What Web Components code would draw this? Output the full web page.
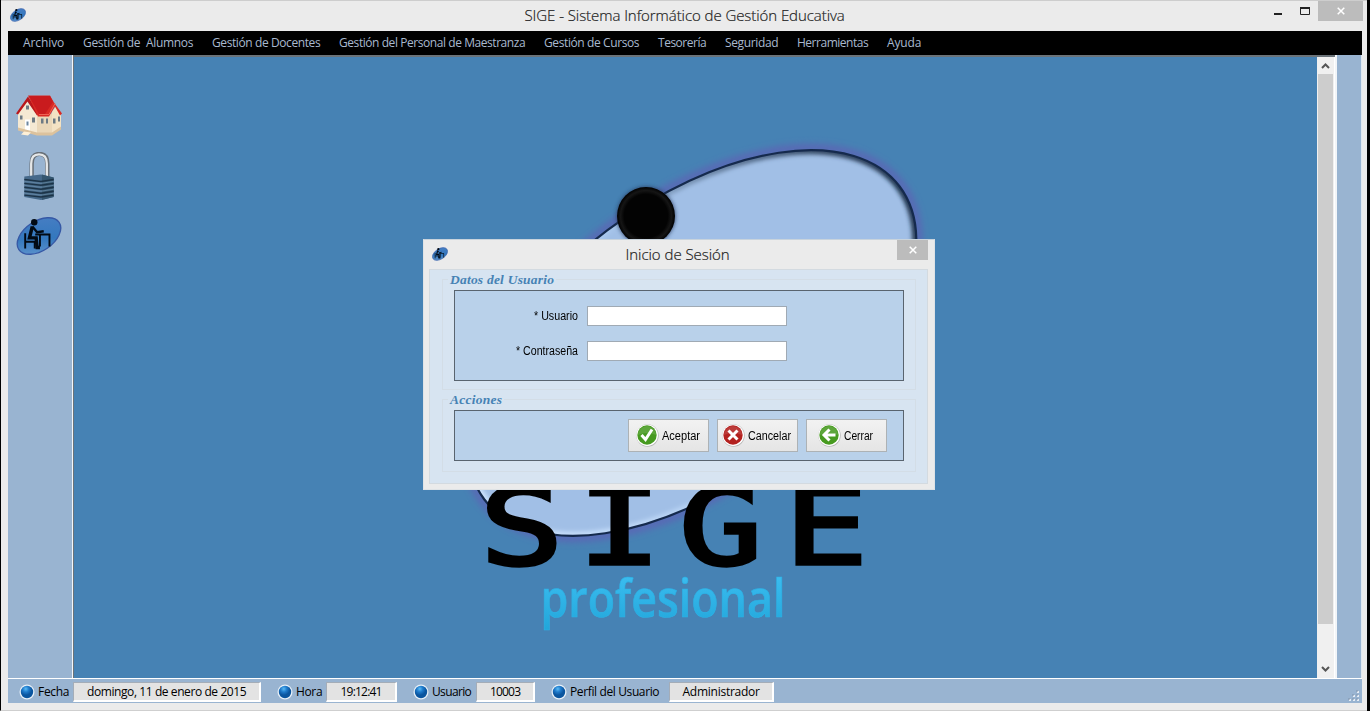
<!DOCTYPE html>
<html lang="es">
<head>
<meta charset="utf-8">
<title>SIGE</title>
<style>
html,body{margin:0;height:100%;overflow:hidden;background:#000;font-family:"Open Sans","Noto Sans",sans-serif}
</style>
</head>
<body>
<sige-app></sige-app>
<script>
function define(name, html, ready){
  const t=document.createElement('template');
  t.innerHTML=html;
  customElements.define(name,class extends HTMLElement{
    connectedCallback(){
      if(this.shadowRoot)return;
      this.attachShadow({mode:'open'}).appendChild(t.content.cloneNode(true));
      if(ready)ready(this,this.shadowRoot);
    }
  });
}

function fitLabel(w,text,narrow){
  const e=document.createElement('fit-label');
  e.setAttribute('w',w);e.setAttribute('text',text);
  if(narrow)e.setAttribute('narrow','');
  return e;
}

/* Single-line label fitted to a given width, by tracking or by condensing. */
define('fit-label',`<style>:host{display:inline-block;white-space:pre;flex:none}span{display:inline-block;transform-origin:0 50%}</style><span></span>`,(h,r)=>{
  const s=r.querySelector('span'),w=+h.getAttribute('w'),t=h.getAttribute('text');
  s.textContent=t;
  h.style.width=w+'px';
  const n=s.getBoundingClientRect().width;
  if(h.hasAttribute('narrow'))s.style.transform='scaleX('+w/n+')';
  else s.style.letterSpacing=((w+.2-n)/t.length)+'px';
});

define('sige-mark',`<style>:host{display:block;width:16px;height:14px}svg{display:block;width:100%;height:100%}</style>
<svg viewBox="0 0 48 42"><defs><linearGradient id="g" x1="0" y1="1" x2="1" y2="0"><stop offset="0" stop-color="#6a9bd0"/><stop offset=".45" stop-color="#3478be"/><stop offset="1" stop-color="#4b7fc4"/></linearGradient></defs>
<ellipse cx="24" cy="21" rx="25.500" ry="15.500" transform="rotate(-34 24 21)" fill="url(#g)" stroke="#3658a5" stroke-width="1.400"/>
<g fill="none" stroke="#020a14" stroke-width="2"><path d="M9.500 18v16M9.500 27h10v7M20 19.500h16M25 20v12M35 20v12"/><path d="M17 11l-3 12h7l1 10h3" stroke-width="3.600"/><path d="M17 11l5 6 7-1" stroke-width="2.500"/></g>
<circle cx="19" cy="6.500" r="3.400" fill="#020a14"/></svg>`);

define('close-button',`<style>:host{display:flex;align-items:center;justify-content:center;background:#bcbcbc;height:20px}svg{width:8px;height:8px}</style>
<svg viewBox="0 0 9 9"><path d="M.8 .8L8.200 8.200M8.200 .8L.8 8.200" stroke="#fff" stroke-width="1.700"/></svg>`);

define('title-bar',`<style>
:host{display:grid;grid-template-columns:1fr auto 1fr;height:30px;border-top:1px solid #cdcdcd;background:#ebebeb;color:#222}
sige-mark{margin:7px 0 0 9px}
fit-label{font:300 15px/28px "Open Sans","Noto Sans",sans-serif;-webkit-text-stroke:.2px #222;padding-left:1px}
.r{display:flex;justify-content:flex-end;align-items:flex-start}
.r svg{width:40px;height:20px;margin-right:6px}
close-button{width:45px;margin-right:4px}
</style><sige-mark></sige-mark><fit-label w="320" text="SIGE - Sistema Informático de Gestión Educativa"></fit-label>
<div class="r"><svg viewBox="0 0 40 20"><path d="M2 13h8" stroke="#222" stroke-width="2"/><path d="M28.500 7v6.500h9V7" fill="none" stroke="#222"/><path d="M28 7h10" stroke="#222" stroke-width="2"/></svg><close-button></close-button></div>`);

define('menu-bar',`<style>:host{display:flex;gap:19px;height:24px;padding:0 15px;background:#000;color:#a9b9cf;font:12px/24px "Open Sans","Noto Sans",sans-serif}</style>
<fit-label w="41" text="Archivo"></fit-label><fit-label w="110" text="Gestión de  Alumnos"></fit-label><fit-label w="108" text="Gestión de Docentes"></fit-label><fit-label w="186" text="Gestión del Personal de Maestranza"></fit-label><fit-label w="95" text="Gestión de Cursos"></fit-label><fit-label w="48" text="Tesorería"></fit-label><fit-label w="53" text="Seguridad"></fit-label><fit-label w="71" text="Herramientas"></fit-label><fit-label w="34" text="Ayuda"></fit-label>`);

define('tool-bar',`<style>:host{display:flex;flex-direction:column;align-items:center;width:65px;box-sizing:border-box;padding:39px 2px 0 0;background:#99b4d1;border-right:1px solid #f4f7fa}
svg{display:block;flex:none}sige-mark{width:46px;height:40px;margin-top:15px}.l{margin-top:15px}</style>
<svg width="48" height="43" viewBox="0 0 48 42">
<path d="M3 18L12 7 22 19v21L3 35z" fill="#f5e9d3"/><path d="M22 19h19l5 0v15l-9 6-15 0z" fill="#ead7b8"/><path d="M37 17l4-5 5 8v14l-9 6z" fill="#f3e2c4"/>
<path d="M1 19L13 2l11 17-2 2L12.500 7 3 20z" fill="#b9171b"/><path d="M13 1h22l4 7 8 11-2 2-5-9-6 10H23z" fill="#d92a25"/><path d="M14 1.500h21l3 6-8 12h-6z" fill="#c91b1e"/><path d="M24 20h10l6-11" fill="none" stroke="#ef6354"/>
<path d="M11 11h3v4h-3zM5 21h2.500v4H5zM17 23h3v5h-3zM26 24h2.500v5H26zM31 24h2v5h-2zM38 24h2.500v5H38zM43 22h2v5h-2z" fill="#6d7a84"/><path d="M10 25h5v13l-5-1z" fill="#fff"/><path d="M11.500 27h2v4h-2z" fill="#6d87a0"/>
<path d="M3 33l19 5h15l9-6v3l-9 6H22L3 36z" fill="#dcc29d"/><path d="M9 37l7 1-3 3-7-1z" fill="#fff0d6"/></svg>
<svg class="l" width="34" height="49" viewBox="0 0 34 50"><path d="M9.500 28V12q0-10 8-10t8 10v16" fill="none" stroke="#687078" stroke-width="4.400"/><path d="M9 28V12q0-9.500 8-9.500t8 9.500v16" fill="none" stroke="#e5e7e8" stroke-width="2.300"/>
<path d="M2 25l17-2 13 3v20l-13 3L2 46z" fill="#46698a"/><path d="M20 23l12 3v20l-12 3z" fill="#35566f"/>
<path d="M2 28l17 2 13-2M2 32l17 2 13-2M2 36l17 2 13-2M2 40l17 2 13-2M2 44l17 2 13-2" fill="none" stroke="#1c3347" stroke-width="1.500"/><path d="M2 30l17 2 13-2M2 34l17 2 13-2M2 38l17 2 13-2M2 42l17 2 13-2" fill="none" stroke="#6e90ab" stroke-width=".7"/></svg>
<sige-mark></sige-mark>`);

define('sige-logo',`<style>:host{display:block;flex:1;min-width:0;background:#4682b4;overflow:hidden}svg{display:block}</style>
<svg width="1243" height="621" viewBox="74 57 1243 621"><defs>
<filter id="b" x="-20%" y="-20%" width="140%" height="140%"><feGaussianBlur stdDeviation="3.500"/></filter><filter id="c"><feGaussianBlur stdDeviation="2.200"/></filter>
<linearGradient id="t" x1="0" y1="0" x2="0" y2="1"><stop offset=".2" stop-color="#3bbdf0"/><stop offset="1" stop-color="#20a5d9"/></linearGradient>
<linearGradient id="s" x1="0" y1="0" x2="1" y2="0"><stop offset="0" stop-color="#d0e5ff"/><stop offset=".5" stop-color="#a9c8ed"/><stop offset="1" stop-color="#172942"/></linearGradient>
<radialGradient id="k"><stop offset=".75" stop-color="#030303"/><stop offset=".88" stop-color="#151515"/><stop offset="1" stop-color="#000"/></radialGradient>
<clipPath id="p"><ellipse cx="692" cy="343" rx="260" ry="141"/></clipPath></defs>
<g transform="rotate(-37 692 343)"><ellipse cx="692" cy="343" rx="262" ry="143" fill="none" stroke="#6558b5" stroke-opacity=".65" stroke-width="8" filter="url(#b)"/>
<ellipse cx="692" cy="343" rx="260" ry="141" fill="#a1bfe6"/><g clip-path="url(#p)"><ellipse cx="692" cy="343" rx="259" ry="140" fill="none" stroke="url(#s)" stroke-width="6" filter="url(#c)"/></g>
<ellipse cx="692" cy="343" rx="260" ry="141" fill="none" stroke="#152a4d" stroke-width="2.200"/></g>
<circle cx="646" cy="216" r="29" fill="#26395c" filter="url(#c)"/><circle cx="646" cy="216" r="29" fill="url(#k)"/>
<text transform="translate(0 564) scale(1.3 1)" x="401.300 476.700 554.600 635.400" y="0" text-anchor="middle" font-family="DejaVu Sans Mono" font-size="107" stroke="#000" stroke-width="3.400">SIGE</text>
<text x="540.500" y="617" textLength="245" lengthAdjust="spacingAndGlyphs" font-family="Open Sans,Noto Sans,sans-serif" font-weight="600" font-size="53" fill="url(#t)" stroke="#2cb1e5" stroke-width=".7">profesional</text></svg>`);

define('scroll-bar',`<style>:host{display:flex;flex-direction:column;width:18px;box-sizing:border-box;padding:0 1px;background:#f0f0f0;border-right:1px solid #fff}svg{width:15px;height:17px}div{width:15px;height:550px;background:#cdcdcd}.d{margin-top:auto}</style>
<svg viewBox="0 0 15 17"><path d="M4 11l3.500-3.500L11 11" fill="none" stroke="#555" stroke-width="2"/></svg><div></div><svg class="d" viewBox="0 0 15 17"><path d="M4 6l3.500 3.500L11 6" fill="none" stroke="#555" stroke-width="2"/></svg>`);

define('status-item',`<style>:host{display:flex;align-items:center;height:20px;color:#000;font:12px/20px "Open Sans","Noto Sans",sans-serif}svg{width:16px;height:16px;margin-right:3px}
div{height:20px;box-sizing:border-box;background:#e3e3e3;border:1px solid;border-color:#a4adb8 #fff #fff #a4adb8;border-right-width:2px;border-bottom-width:2px;display:flex;justify-content:center;line-height:18px}</style>
<svg viewBox="0 0 16 16"><defs><radialGradient id="a" cx=".4" cy=".25"><stop offset="0" stop-color="#5bbcf5"/><stop offset=".5" stop-color="#1f7bcc"/><stop offset="1" stop-color="#0a559f"/></radialGradient></defs><circle cx="8" cy="8" r="7.500" fill="#e7eff7"/><circle cx="8" cy="8" r="6.200" fill="url(#a)"/></svg><span></span><div></div>`,(h,r)=>{
  const a=n=>h.getAttribute(n);
  r.querySelector('span').append(fitLabel(a('lw'),a('label')));
  const b=r.querySelector('div');b.style.width=a('bw')+'px';b.style.marginLeft=a('gap')+'px';
  b.append(fitLabel(a('vw'),a('value')));
});

define('status-bar',`<style>:host{display:flex;align-items:flex-start;height:24px;box-sizing:border-box;padding:3px 0 0 11px;background:#99b4d1}
svg{margin:8px 2px 0 auto}</style>
<status-item label="Fecha" lw="31" gap="4" bw="188" value="domingo, 11 de enero de 2015" vw="159"></status-item>
<status-item style="margin-left:16px" label="Hora" lw="26" gap="4" bw="71" value="19:12:41" vw="41"></status-item>
<status-item style="margin-left:16px" label="Usuario" lw="39" gap="5" bw="59" value="10003" vw="30"></status-item>
<status-item style="margin-left:16px" label="Perfil del Usuario" lw="89" gap="10" bw="105" value="Administrador" vw="77"></status-item>
<svg width="12" height="12"><path d="M9 1h2v2H9zM5 5h2v2H5zM9 5h2v2H9zM1 9h2v2H1zM5 9h2v2H5zM9 9h2v2H9z" fill="#e6edf5"/><path d="M8 0h2v2H8zM4 4h2v2H4zM8 4h2v2H8zM0 8h2v2H0zM4 8h2v2H4zM8 8h2v2H8z" fill="#8194ab" opacity=".5"/></svg>`);

define('group-box',`<style>:host{display:block;position:relative;box-sizing:border-box;border:1px solid #d3dde6;padding:10px 11px 0}
fit-label{position:absolute;top:-9px;left:5px;padding:0 2px;background:#d7e4f1;color:#4682b4;font:italic 700 13.500px/18px "Liberation Serif","DejaVu Serif",serif}
.i{box-sizing:border-box;background:#b9d1ea;border:1px solid #59646f;height:var(--inner)}</style><div class="i"><slot></slot></div>`,(h,r)=>{
  r.append(fitLabel(h.getAttribute('w'),h.getAttribute('title-text')));
});

define('text-field',`<style>:host{display:flex;align-items:center;height:21px;color:#000;font:12px/22px "Liberation Sans",Arial,sans-serif}
span{width:123px;margin-right:9px;display:flex;justify-content:flex-end}input{width:200px;height:20px;box-sizing:border-box;border:1px solid #a0aab4;background:#fff;margin:1px 0 0;padding:0 3px;border-radius:0}</style><span></span><input>`,(h,r)=>{
  r.querySelector('span').append(fitLabel(h.getAttribute('w'),h.getAttribute('label'),true));
});

define('action-button',`<style>:host{display:flex;align-items:center;justify-content:center;gap:3px;width:81px;height:33px;box-sizing:border-box;padding-right:2px;border:1px solid #adb2b5;background:linear-gradient(#f2f2f2,#e5e5e5);color:#000;font:12px/31px "Liberation Sans",Arial,sans-serif}svg{width:23px;height:23px;flex:none}fit-label{padding-top:2px}</style>
<svg viewBox="0 0 23 23"><circle cx="11.500" cy="11.500" r="11.200" fill="#b8b8b8"/><circle cx="11.200" cy="11.200" r="10.800" fill="#fff"/><circle id="f" cx="11" cy="11" r="9.700"/><path d="M2 11a9 9 0 0 1 18 0q-9-4-18 0" fill="#fff" opacity=".12"/><path id="p" fill="none" stroke="#fff" stroke-width="3"/></svg>`,(h,r)=>{
  const k=h.getAttribute('kind'),d={ok:'M5.500 11l4 4.500L16 5.500',no:'M6.500 6.500l9 9M15.500 6.500l-9 9',back:'M17.500 11H7M11.500 5.500L6 11l5.500 5.500'};
  r.getElementById('f').setAttribute('fill',k==='no'?'#b3211f':'#479a20');
  r.getElementById('p').setAttribute('d',d[k]);
  r.append(fitLabel(h.getAttribute('w'),h.getAttribute('label'),true));
});

define('login-dialog',`<style>
:host{display:block;width:512px;height:251px;box-sizing:border-box;background:#ebebeb;border:1px solid #dfe3e6;border-top-color:#c8d3dc}
header{display:grid;grid-template-columns:1fr auto 1fr;height:29px;color:#222}
header sige-mark{margin:7px 0 0 8px}
header fit-label{font:300 15px/28px "Open Sans","Noto Sans",sans-serif;-webkit-text-stroke:.2px #222;padding-right:3px}
close-button{width:31px;justify-self:end;margin-right:6px}
main{margin:0 6px 0 5px;height:215px;box-sizing:border-box;border:1px solid #d3dae0;background:#d7e4f1;padding:9px 11px 0 12px}
.f{padding:14px 0 0;display:flex;flex-direction:column;gap:14px}
.b{padding:8px 16px 0 0;display:flex;justify-content:flex-end;gap:8px}
</style>
<header><sige-mark></sige-mark><fit-label w="104" text="Inicio de Sesión"></fit-label><close-button></close-button></header>
<main><group-box title-text="Datos del Usuario" w="104" style="height:111px;--inner:91px"><div class="f"><text-field label="* Usuario" w="44"></text-field><text-field label="* Contraseña" w="62"></text-field></div></group-box>
<group-box title-text="Acciones" w="52" style="height:73px;margin-top:9px;--inner:51px"><div class="b"><action-button kind="ok" label="Aceptar" w="38"></action-button><action-button kind="no" label="Cancelar" w="43"></action-button><action-button kind="back" label="Cerrar" w="29"></action-button></div></group-box></main>`);

define('sige-app',`<style>
:host{display:block;width:1367px;height:711px;box-sizing:border-box;border-left:1px solid #000;border-bottom:1px solid #cfcfcf;background:#ebebeb;position:relative}
.w{margin:0 5px 0 7px}
.c{display:flex;height:623px;background:#99b4d1}
.m{display:flex;flex:1;min-width:0;box-sizing:border-box;border-left:1px solid #6b7379;border-top:2px solid #6b7379}
.e{width:27px;box-sizing:border-box;background:#99b4d1;border-left:2px solid #f2f5f8;border-right:1px solid #dfe7ef}
.h{height:1px;background:#fff}
login-dialog{position:absolute;left:422px;top:239px}
title-bar{box-sizing:border-box;height:31px}
</style>
<title-bar></title-bar>
<div class="w"><menu-bar></menu-bar><div class="c"><tool-bar></tool-bar><div class="m"><sige-logo></sige-logo><scroll-bar></scroll-bar></div><div class="e"></div></div><div class="h"></div><status-bar></status-bar></div>
<login-dialog></login-dialog>`);
</script>
</body>
</html>
